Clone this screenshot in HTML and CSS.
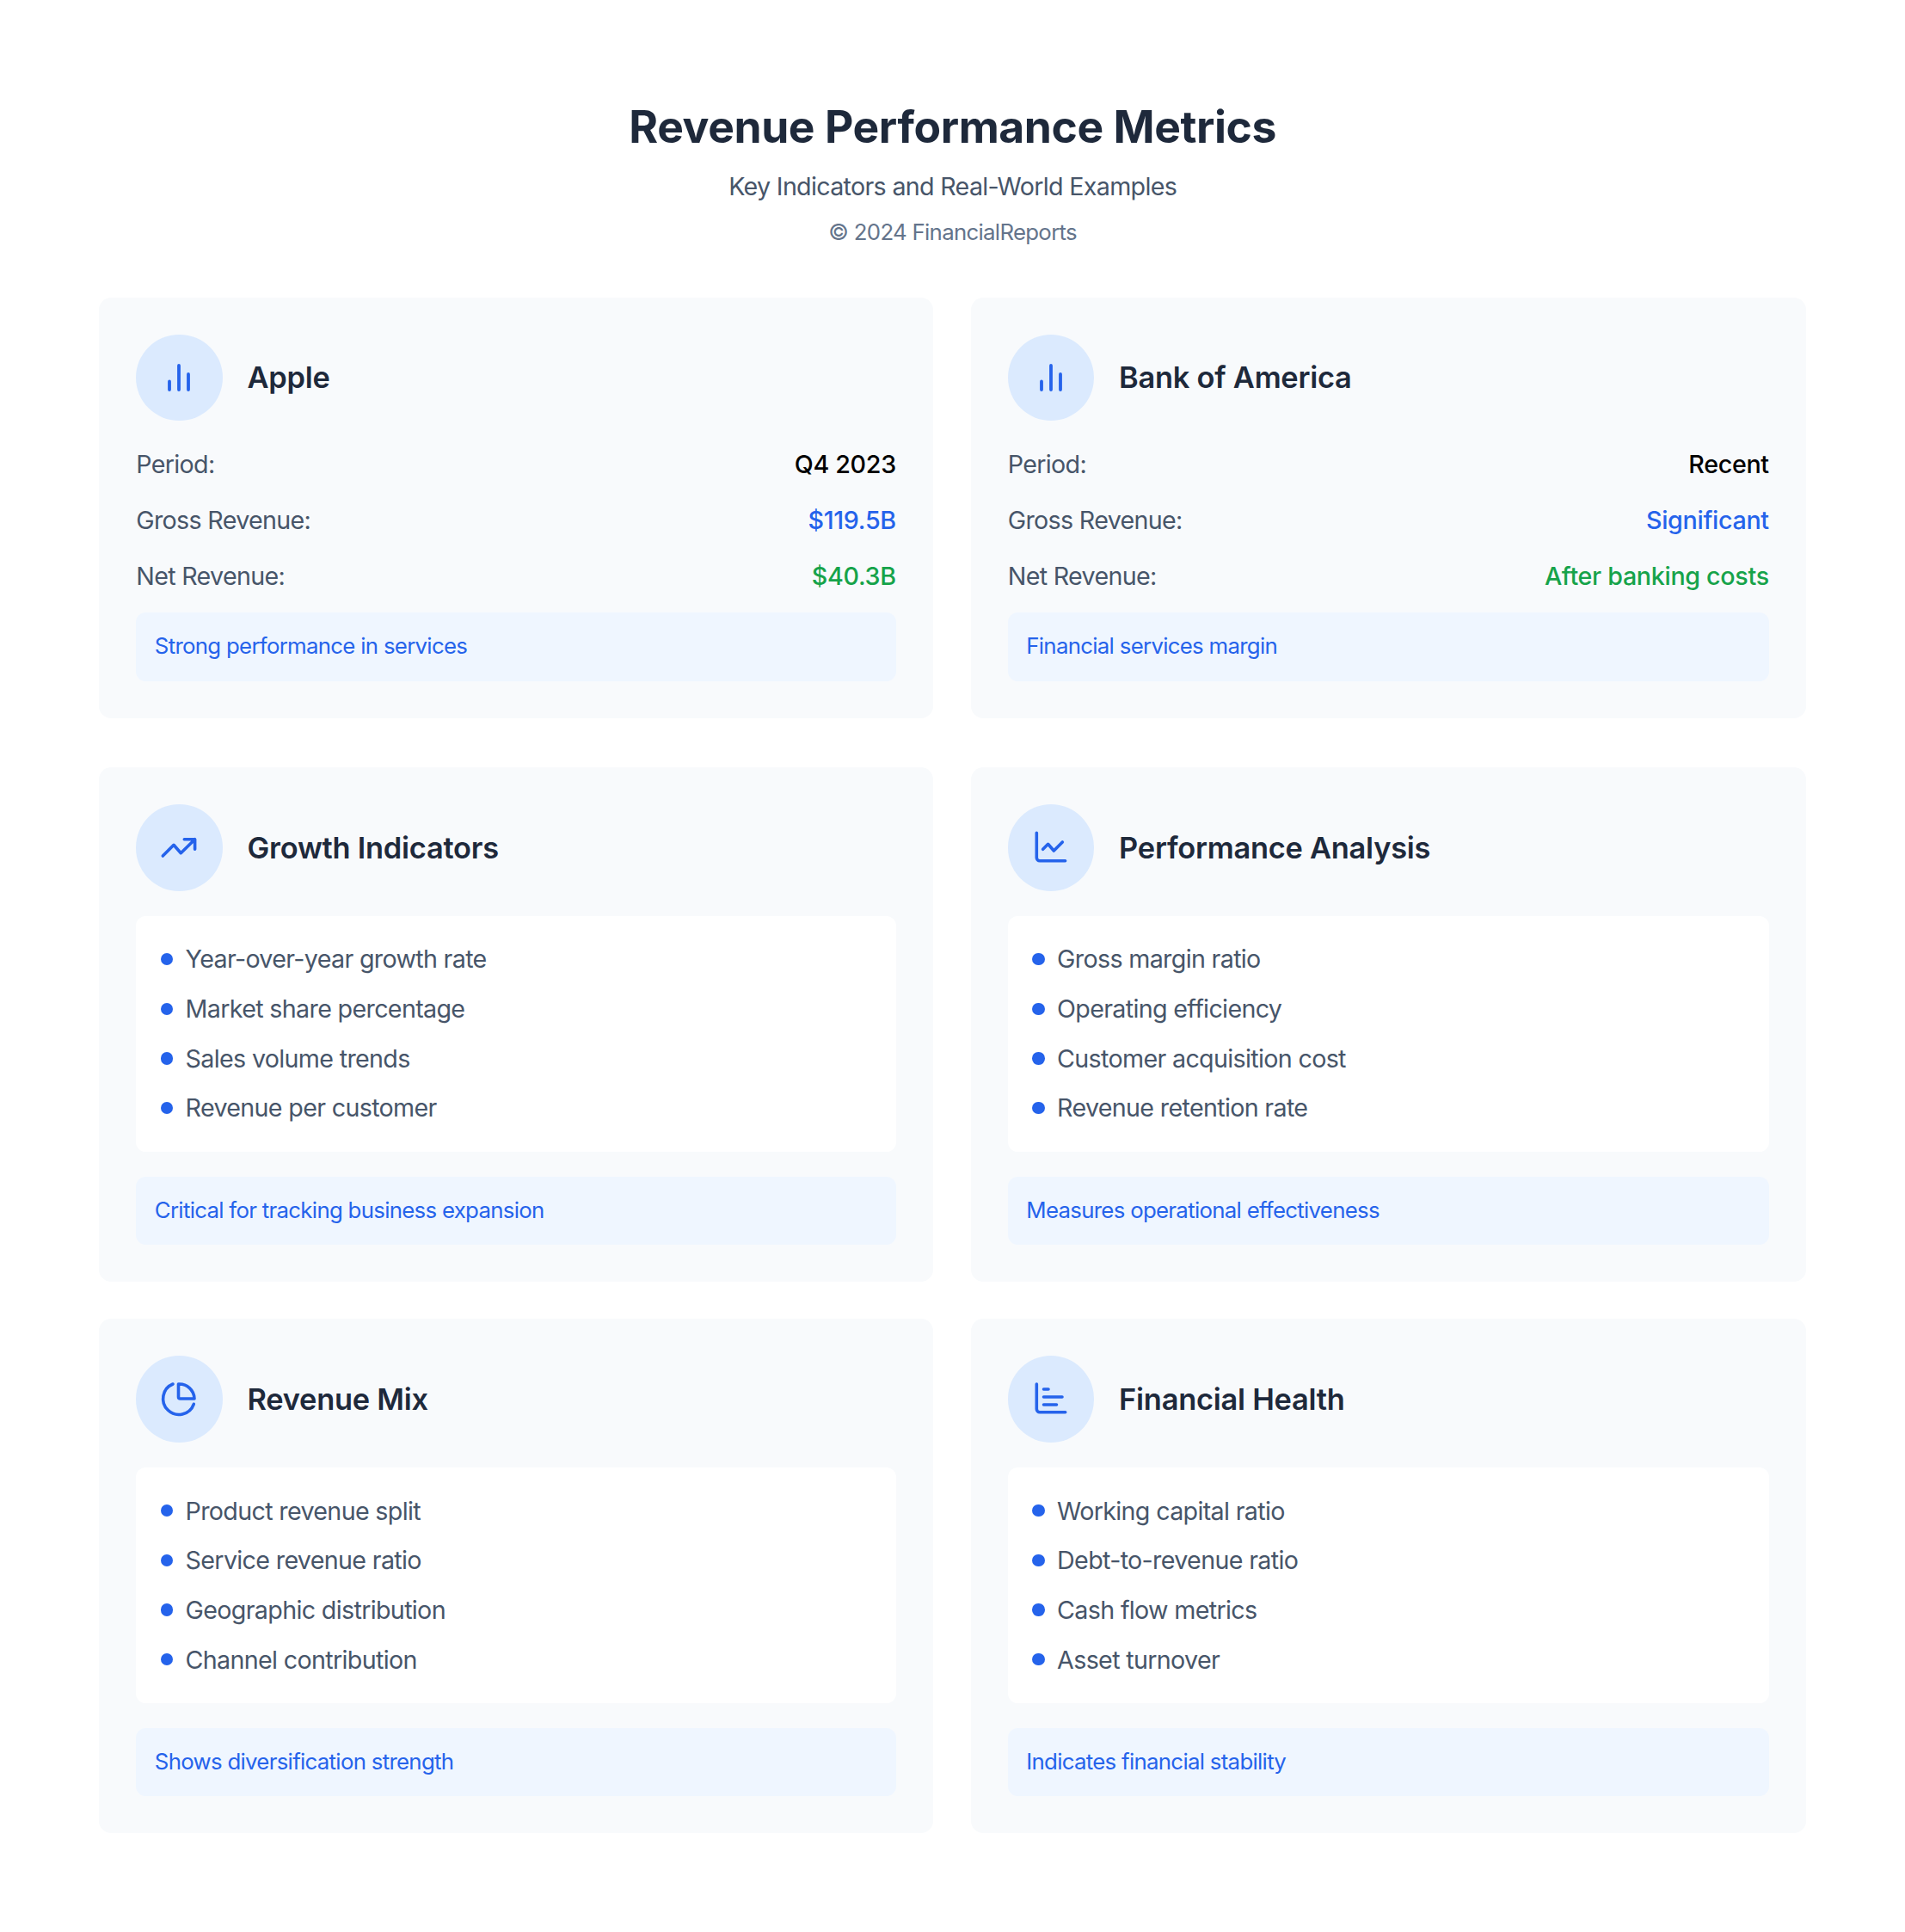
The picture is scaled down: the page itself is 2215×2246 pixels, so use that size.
FILE: index.html
```html
<!DOCTYPE html>
<html lang="en">
<head>
<meta charset="utf-8">
<title>Revenue Performance Metrics</title>
<link rel="stylesheet" href="styles.css">
</head>
<body>
<main class="page">
  <header class="head">
    <h1>Revenue Performance Metrics</h1>
    <p class="sub">Key Indicators and Real-World Examples</p>
    <p class="copy">© 2024 FinancialReports</p>
  </header>

  <section class="grid top">
    <article class="card">
      <div class="card-head summary">
        <div class="badge"><svg class="icon" viewBox="-25 -25 50 50"><path class="thick" d="M-11 4.5V14M0-14V14M11-4V14"/></svg></div>
        <h2>Apple</h2>
      </div>
      <div class="row"><span>Period:</span><span class="val">Q4 2023</span></div>
      <div class="row"><span>Gross Revenue:</span><span class="val blue">$119.5B</span></div>
      <div class="row"><span>Net Revenue:</span><span class="val green">$40.3B</span></div>
      <p class="note">Strong performance in services</p>
    </article>
    <article class="card">
      <div class="card-head summary">
        <div class="badge"><svg class="icon" viewBox="-25 -25 50 50"><path class="thick" d="M-11 4.5V14M0-14V14M11-4V14"/></svg></div>
        <h2>Bank of America</h2>
      </div>
      <div class="row"><span>Period:</span><span class="val">Recent</span></div>
      <div class="row"><span>Gross Revenue:</span><span class="val blue">Significant</span></div>
      <div class="row"><span>Net Revenue:</span><span class="val green">After banking costs</span></div>
      <p class="note">Financial services margin</p>
    </article>
  </section>

  <section class="grid">
    <article class="card">
      <div class="card-head">
        <div class="badge"><svg class="icon" viewBox="-25 -25 50 50"><path d="M-18.7 10-6-2.7 2.3 6.7 18.6-9.3M6.3-9.3H18.6V2.3"/></svg></div>
        <h2>Growth Indicators</h2>
      </div>
      <ul class="list">
        <li>Year-over-year growth rate</li>
        <li>Market share percentage</li>
        <li>Sales volume trends</li>
        <li>Revenue per customer</li>
      </ul>
      <p class="note">Critical for tracking business expansion</p>
    </article>
    <article class="card">
      <div class="card-head">
        <div class="badge"><svg class="icon" viewBox="-25 -25 50 50"><path d="M-16.7-16.7V12a3.7 3.7 0 0 0 3.7 3.7H16.6M-9.4 2.3-3.4-3.7 3.3 4 13.3-6"/></svg></div>
        <h2>Performance Analysis</h2>
      </div>
      <ul class="list">
        <li>Gross margin ratio</li>
        <li>Operating efficiency</li>
        <li>Customer acquisition cost</li>
        <li>Revenue retention rate</li>
      </ul>
      <p class="note">Measures operational effectiveness</p>
    </article>
    <article class="card">
      <div class="card-head">
        <div class="badge"><svg class="icon" viewBox="-25 -25 50 50"><path d="M-7-17A18.4 18.4 0 1 0 17.3 6.3M-0.5-17A17.5 17.5 0 0 1 18 0H1.5A2 2 0 0 1-0.5-2Z"/></svg></div>
        <h2>Revenue Mix</h2>
      </div>
      <ul class="list">
        <li>Product revenue split</li>
        <li>Service revenue ratio</li>
        <li>Geographic distribution</li>
        <li>Channel contribution</li>
      </ul>
      <p class="note">Shows diversification strength</p>
    </article>
    <article class="card">
      <div class="card-head">
        <div class="badge"><svg class="icon" viewBox="-25 -25 50 50"><path d="M-16.7-17V12a3.7 3.7 0 0 0 3.7 3.7H16.7M-8.5-11H-3M-8.5-2H13M-8.5 7H6.5"/></svg></div>
        <h2>Financial Health</h2>
      </div>
      <ul class="list">
        <li>Working capital ratio</li>
        <li>Debt-to-revenue ratio</li>
        <li>Cash flow metrics</li>
        <li>Asset turnover</li>
      </ul>
      <p class="note">Indicates financial stability</p>
    </article>
  </section>
</main>
</body>
</html>
```
FILE: styles.css
```css
* { box-sizing: border-box; }
html, body { margin: 0; background: #fff; }
body { font-family: Inter, "Liberation Sans", sans-serif; color: #1e293b; }
.page { width: 2215px; padding: 116.4px 115px 0 115.3px; }
.head { text-align: center; margin-bottom: 55.7px; }
h1 { margin: 0; font-size: 51.6px; line-height: 62px; font-weight: 700; letter-spacing: -0.42px; color: #1e293b; }
.sub { margin: 18.6px 0 0; font-size: 28.65px; line-height: 40px; letter-spacing: -0.68px; color: #475569; }
.copy { margin: 13px 0 0; font-size: 25.8px; line-height: 40px; letter-spacing: -0.7px; color: #64748b; }
.grid { display: grid; grid-template-columns: 969.5px 971px; gap: 43.4px 44px; }
.top { margin-bottom: 57.6px; }
.card { background: #f8fafc; border-radius: 14.3px; padding: 43px; }
.card-head { display: flex; align-items: center; gap: 29px; margin-bottom: 29.4px; }
.summary { margin-bottom: 31px; }
.badge { width: 100.3px; height: 100.3px; border-radius: 50%; background: #dbeafe; display: flex; align-items: center; justify-content: center; }
.icon { width: 50px; height: 50px; fill: none; stroke: #2563eb; stroke-width: 3.6; stroke-linecap: round; stroke-linejoin: round; }
.icon .thick { stroke-width: 3.8; }
h2 { margin: 0; font-size: 34.4px; font-weight: 600; letter-spacing: -0.24px; color: #1e293b; }
.row { display: flex; justify-content: space-between; font-size: 28.65px; line-height: 40px; letter-spacing: -0.68px; color: #475569; margin-bottom: 25.2px; }
.row + .note { margin-top: -3.3px; }
.val { font-weight: 500; letter-spacing: -0.3px; color: #000; }
.blue { color: #2563eb; }
.green { color: #16a34a; }
.note { margin: 0; background: #eff6ff; border-radius: 11.5px; padding: 21.2px 21.5px 22.2px; font-size: 25.8px; line-height: 36px; letter-spacing: -0.7px; color: #2563eb; }
.list { list-style: none; margin: 0 0 29px; padding: 21.5px 28.7px; background: #fff; border-radius: 11.5px; }
.list li { position: relative; padding-left: 28.6px; font-size: 28.65px; line-height: 57.67px; letter-spacing: -0.66px; color: #475569; }
.list li::before { content: ""; position: absolute; left: 0; top: 21.5px; width: 14.3px; height: 14.3px; border-radius: 50%; background: #2563eb; }
```
